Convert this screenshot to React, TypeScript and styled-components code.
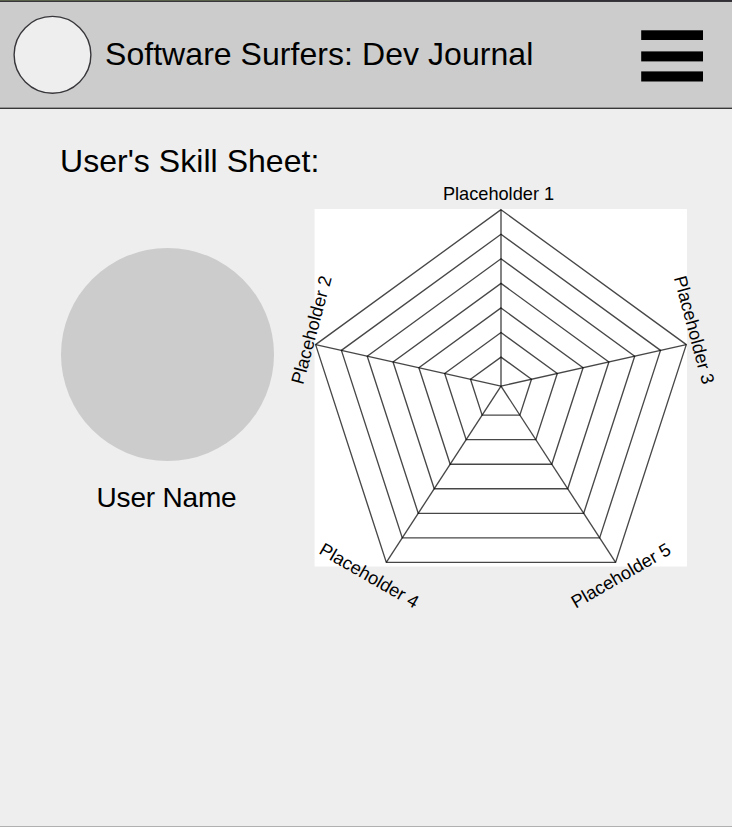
import React from 'react';
import styled, { createGlobalStyle } from 'styled-components';

const GlobalStyle = createGlobalStyle`
  * { box-sizing: border-box; }
  body {
    margin: 0;
    background: #eeeeee;
    color: #000;
    font-family: "Liberation Sans", Arial, sans-serif;
  }
`;

const Page = styled.div`
  display: flex;
  flex-direction: column;
  width: 732px;
  height: 827px;
  overflow: hidden;
  background: #eeeeee;
  border-bottom: 1px solid #b0b0b0;
`;

const TopStrip = styled.div`
  flex: none;
  height: 2px;
  border-bottom: 1px solid #38363a;
  background: linear-gradient(to right, #59614a 350px, #322f37 350px);
`;

const Header = styled.header`
  flex: none;
  display: flex;
  align-items: flex-start;
  height: 107px;
  padding: 13px 29px 0 13px;
  background: #cccccc;
  border-bottom: 1px solid #39363a;
  box-shadow: inset 0 -1px 0 #939393;
`;

const Logo = styled.svg`
  display: block;
  flex: none;
  width: 79px;
  height: 79px;
`;

const Title = styled.h1`
  margin: 20px auto 0 13px;
  font-size: 32px;
  line-height: 38px;
  font-weight: 400;
  letter-spacing: 0.05px;
  white-space: nowrap;
`;

const MenuButton = styled.button`
  margin: 15px 0 0;
  padding: 0;
  border: 0;
  background: none;
`;

const MenuIcon = styled.svg`
  display: block;
  width: 62px;
  height: 52px;
`;

const Content = styled.main`
  display: grid;
  grid-template-columns: 214px 452px;
  column-gap: 6px;
  padding: 33px 0 0 60px;
  align-items: start;
`;

const SheetTitle = styled.h2`
  grid-column: 1 / -1;
  margin: 0;
  height: 38px;
  font-size: 32px;
  line-height: 38px;
  font-weight: 400;
  letter-spacing: 0.04px;
`;

const Profile = styled.section`
  display: flex;
  flex-direction: column;
  align-items: center;
  padding: 68px 0 0 1px;
`;

const Avatar = styled.div`
  width: 213px;
  height: 213px;
  border-radius: 50%;
  background: #cccccc;
`;

const UserName = styled.p`
  margin: 20px 2px 0 0;
  font-size: 28px;
  line-height: 34px;
  letter-spacing: -0.2px;
`;

const Chart = styled.svg`
  display: block;
  width: 452px;
  height: 440px;
`;

const AxisLabel = styled.text`
  font-family: "Liberation Sans", Arial, sans-serif;
  font-size: 18.2px;
  text-anchor: middle;
  fill: #000;
`;

const center = { x: 501, y: 386.1 };
const corners = [
  [501, 209.7],
  [686.3, 344.6],
  [615.6, 562.4],
  [386.3, 562.4],
  [315.6, 344.6],
];
const rings = Array.from({ length: 7 }, (_, i) => 0.1645 + (i * 0.8355) / 6);

const labels = [
  { text: 'Placeholder 1', x: 498.5, y: 194, angle: 0 },
  { text: 'Placeholder 2', x: 311.6, y: 330, angle: -75 },
  { text: 'Placeholder 3', x: 694, y: 330, angle: 75 },
  { text: 'Placeholder 4', x: 369.2, y: 575.7, angle: 30 },
  { text: 'Placeholder 5', x: 621, y: 575.7, angle: -30 },
];

function SkillChart() {
  return (
    <Chart viewBox="280 180 452 440" role="img" aria-label="Skill chart">
      <rect x="314.6" y="209" width="372.4" height="357.5" fill="#fff" />
      <g fill="none" stroke="#000" strokeOpacity="0.72" strokeWidth="1.35">
        {rings.map((scale) => (
          <polygon
            key={scale}
            points={corners
              .map(([x, y]) => `${center.x + (x - center.x) * scale},${center.y + (y - center.y) * scale}`)
              .join(' ')}
          />
        ))}
        {corners.map(([x, y]) => (
          <line key={`${x}-${y}`} x1={center.x} y1={center.y} x2={x} y2={y} />
        ))}
      </g>
      {labels.map(({ text, x, y, angle }) => (
        <AxisLabel key={text} transform={`translate(${x} ${y}) rotate(${angle})`} y="6">
          {text}
        </AxisLabel>
      ))}
    </Chart>
  );
}

export default function App() {
  return (
    <>
      <GlobalStyle />
      <Page>
        <TopStrip />
        <Header>
          <Logo viewBox="0 0 79 79" aria-hidden="true">
            <circle cx="39.5" cy="39.8" r="38.4" fill="#eeeeee" stroke="#38363a" strokeWidth="1.4" />
          </Logo>
          <Title>Software Surfers: Dev Journal</Title>
          <MenuButton aria-label="Menu">
            <MenuIcon viewBox="0 0 62 52">
              <rect x="0.2" y="0.3" width="61.8" height="9.7" />
              <rect x="0.2" y="21.4" width="61.8" height="10" />
              <rect x="0.2" y="41.4" width="61.8" height="10.1" />
            </MenuIcon>
          </MenuButton>
        </Header>
        <Content>
          <SheetTitle>User's Skill Sheet:</SheetTitle>
          <Profile>
            <Avatar />
            <UserName>User Name</UserName>
          </Profile>
          <SkillChart />
        </Content>
      </Page>
    </>
  );
}
